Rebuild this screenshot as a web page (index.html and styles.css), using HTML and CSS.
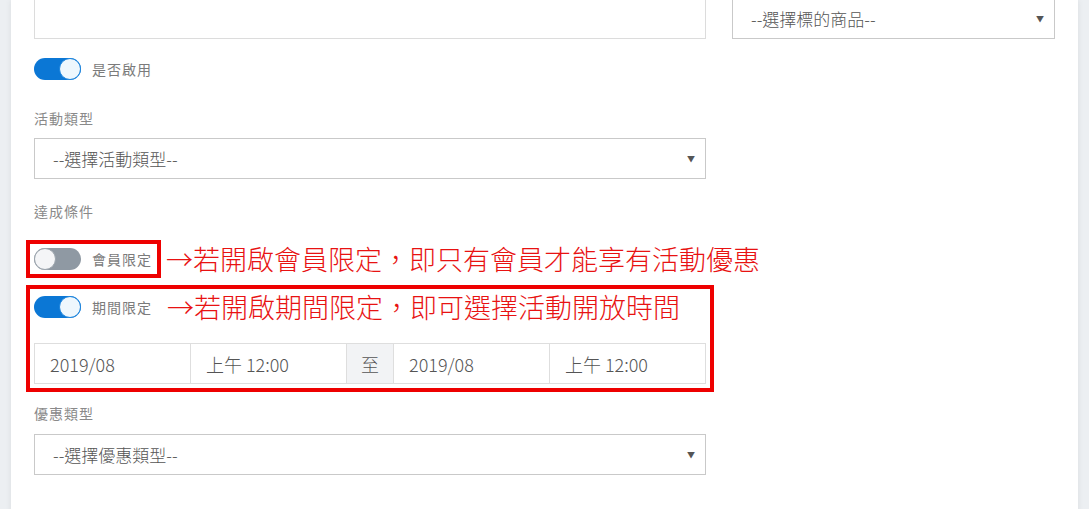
FILE: index.html
```html
<!DOCTYPE html>
<html lang="zh-Hant">
<head>
    <meta charset="UTF-8">
    <meta name="viewport" content="width=device-width, initial-scale=1.0">
    <title>活動設定</title>
    <link rel="stylesheet" href="styles.css">
</head>
<body>

    <div class="card">
        <!-- 上方：描述欄位 + 標的商品 -->
        <div class="top-row">
            <div class="text-area"></div>
            <div class="select">
                <span>--選擇標的商品--</span>
                <span class="caret">▼</span>
            </div>
        </div>

        <div class="toggle-row first-toggle">
            <label class="switch on"><span class="knob"></span></label>
            <span class="switch-label">是否啟用</span>
        </div>

        <div class="field-label label-type">活動類型</div>
        <div class="select wide">
            <span>--選擇活動類型--</span>
            <span class="caret">▼</span>
        </div>

        <div class="field-label label-cond">達成條件</div>

        <!-- 說明用紅框 -->
        <div class="note-line">
            <div class="mark mark-member">
                <div class="toggle-row">
                    <label class="switch"><span class="knob"></span></label>
                    <span class="switch-label">會員限定</span>
                </div>
            </div>
            <span class="note">→若開啟會員限定，即只有會員才能享有活動優惠</span>
        </div>

        <div class="mark mark-period">
            <div class="toggle-row">
                <label class="switch on"><span class="knob"></span></label>
                <span class="switch-label">期間限定</span>
                <span class="note inner">→若開啟期間限定，即可選擇活動開放時間</span>
            </div>
            <div class="date-group">
                <div class="cell">2019/08</div>
                <div class="cell">上午 12:00</div>
                <div class="addon">至</div>
                <div class="cell">2019/08</div>
                <div class="cell">上午 12:00</div>
            </div>
        </div>

        <div class="field-label label-discount">優惠類型</div>
        <div class="select wide">
            <span>--選擇優惠類型--</span>
            <span class="caret">▼</span>
        </div>
    </div>

</body>
</html>
```

FILE: styles.css
```css
body {
    margin: 0;
    background: #eceff2;
    font-family: "Noto Sans CJK TC", "Noto Sans", sans-serif;
    color: #555;
    min-height: 100vh;
}

.card {
    display: flex;
    flex-direction: column;
    align-items: flex-start;
    margin: 0 11px;
    padding: 0 23px 40px;
    min-height: 509px;
    box-sizing: border-box;
    background: #fff;
    box-shadow: 0 0 6px rgba(0, 0, 0, 0.08);
    overflow: hidden;
}

/* 上方兩欄 */
.top-row {
    display: grid;
    grid-template-columns: 672px 323px;
    column-gap: 26px;
    align-items: end;
    margin-top: -61px;
}

.text-area {
    height: 100px;
    border: 1px solid #dcdcdc;
    box-sizing: border-box;
}

.select {
    display: flex;
    justify-content: space-between;
    align-items: center;
    height: 41px;
    padding: 0 10px 0 18px;
    border: 1px solid #c9c9c9;
    box-sizing: border-box;
    font-size: 17px;
    font-weight: 300;
    color: #555;
    background: #fff;
}

.select.wide {
    width: 672px;
}

.caret {
    font-size: 8px;
    color: #555;
}

/* 標籤 */
.field-label {
    font-size: 14px;
    line-height: 20px;
    letter-spacing: 1px;
    color: #8a8a8a;
}

.label-type {
    margin: 28px 0 10px;
}

.label-cond {
    margin: 22px 0 19px;
}

.label-discount {
    margin: 11px 0 11px;
}

/* 開關 */
.toggle-row {
    display: flex;
    align-items: center;
    height: 22px;
}

.first-toggle {
    margin-top: 19px;
}

.switch {
    position: relative;
    width: 47px;
    height: 22px;
    border-radius: 11px;
    background: #8f99a3;
    flex-shrink: 0;
}

.switch.on {
    background: #0b77d5;
}

.knob {
    position: absolute;
    top: 0;
    left: 0;
    width: 22px;
    height: 22px;
    box-sizing: border-box;
    border-radius: 50%;
    background: #f4f5f7;
    border: 1.5px solid #9aa3ac;
}

.switch.on .knob {
    left: 25px;
    background: #eef7fd;
    border-color: #1a83dd;
}

.switch-label {
    margin-left: 11px;
    font-size: 14px;
    letter-spacing: 1px;
    color: #7b7b7b;
}

/* 紅框說明 */
.note-line {
    display: flex;
    align-items: center;
}

.mark {
    border: 4px solid #ee0000;
    margin-left: -8px;
}

.mark-member {
    padding: 4px 5px 4px 4px;
}

.mark-period {
    margin-top: 7px;
    padding: 7px 4px 4px 4px;
}

.note {
    margin-left: 5px;
    font-size: 27px;
    font-weight: 300;
    line-height: 22px;
    color: #e81212;
    white-space: nowrap;
}

.note.inner {
    margin-left: 15px;
}

/* 日期區間 */
.date-group {
    display: flex;
    width: 672px;
    height: 41px;
    margin-top: 25px;
    border: 1px solid #dedede;
    box-sizing: border-box;
    font-size: 18px;
    font-weight: 300;
    color: #555;
}

.cell {
    display: flex;
    align-items: center;
    width: 156px;
    padding-left: 15px;
    box-sizing: border-box;
    border-right: 1px solid #dedede;
}

.cell:last-child {
    border-right: none;
    flex: 1;
}

.addon {
    display: flex;
    align-items: center;
    justify-content: center;
    width: 46px;
    background: #f2f3f5;
    border-right: 1px solid #dedede;
}
```
